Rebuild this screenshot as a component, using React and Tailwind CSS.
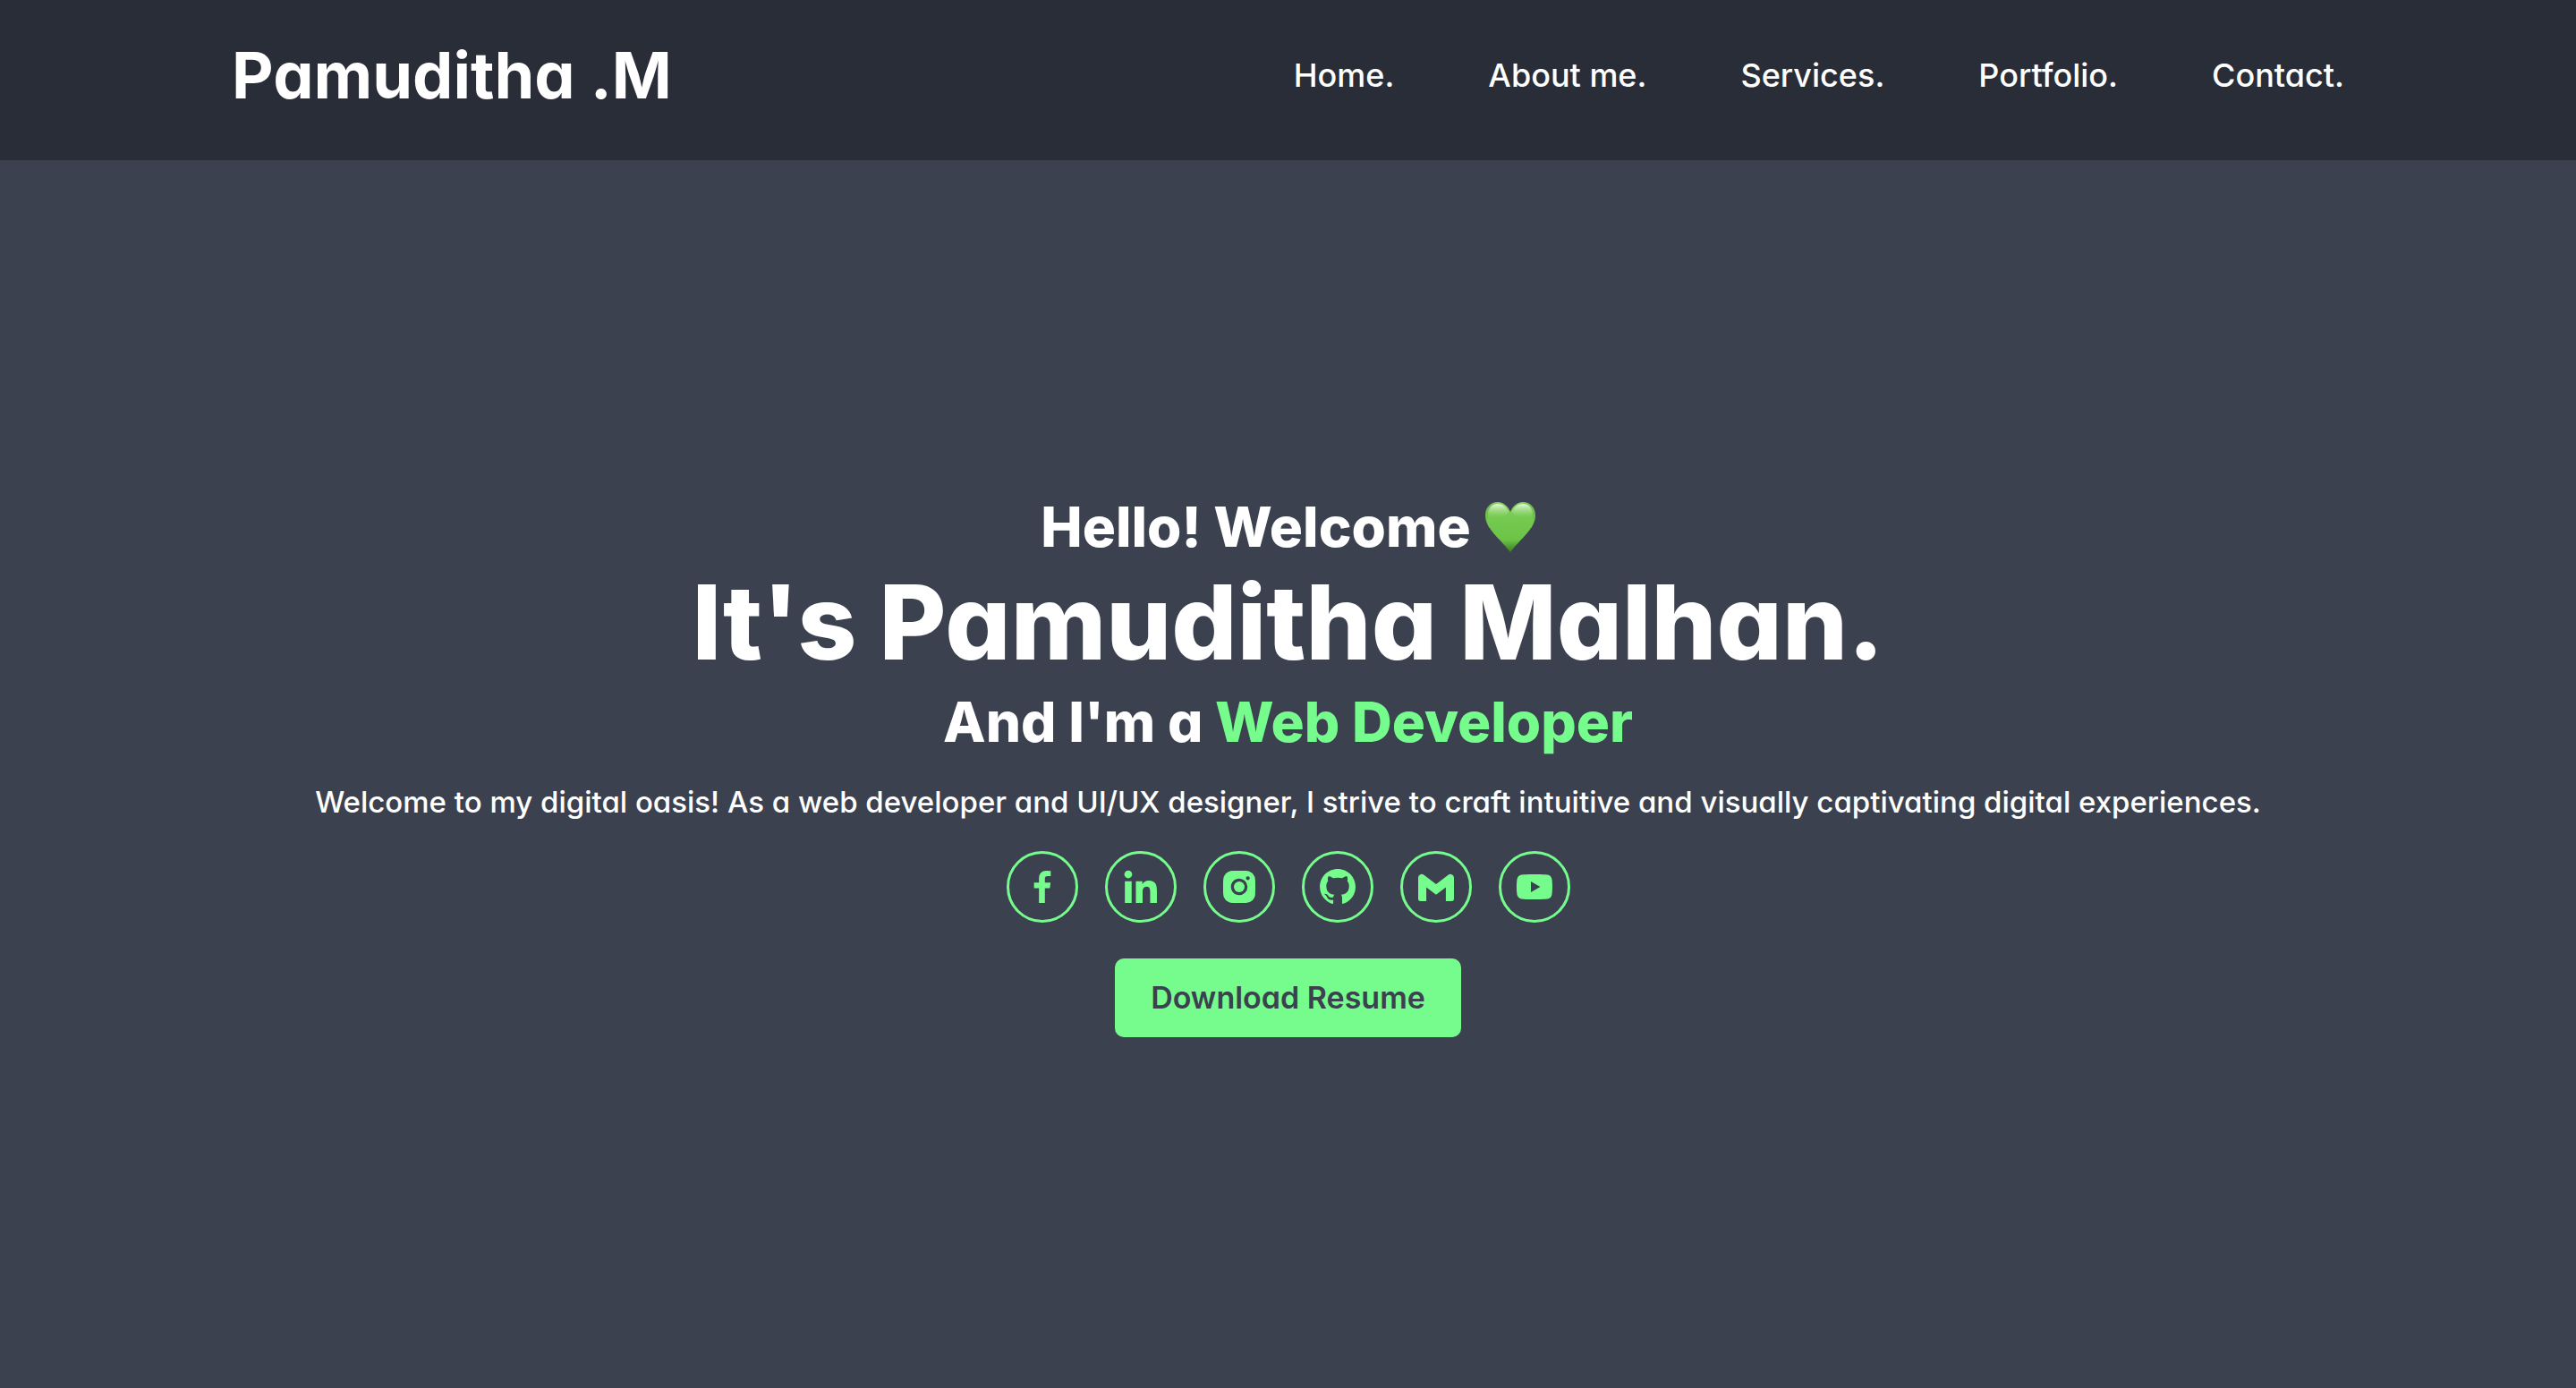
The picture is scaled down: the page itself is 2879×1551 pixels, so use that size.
import React from "react";
import {
  BiLogoFacebook,
  BiLogoLinkedin,
  BiLogoInstagramAlt,
  BiLogoGithub,
  BiLogoGmail,
  BiLogoYoutube,
} from "react-icons/bi";

const links = ["Home.", "About me.", "Services.", "Portfolio.", "Contact."];

const socials = [
  { name: "Facebook", Icon: BiLogoFacebook },
  { name: "LinkedIn", Icon: BiLogoLinkedin },
  { name: "Instagram", Icon: BiLogoInstagramAlt },
  { name: "GitHub", Icon: BiLogoGithub },
  { name: "Gmail", Icon: BiLogoGmail },
  { name: "YouTube", Icon: BiLogoYoutube },
];

function GreenHeart() {
  return (
    <svg viewBox="0 0 56 56" className="h-14 w-14" role="img" aria-label="Green heart">
      <defs>
        <linearGradient id="heart-body" x1="0" y1="0" x2="0" y2="1">
          <stop offset="0" stopColor="#86d268" />
          <stop offset="0.35" stopColor="#74c94f" />
          <stop offset="0.75" stopColor="#6cc447" />
          <stop offset="1" stopColor="#3f8526" />
        </linearGradient>
        <linearGradient id="heart-shine" x1="0" y1="0" x2="0" y2="1">
          <stop offset="0" stopColor="#f2fbe9" stopOpacity="0.9" />
          <stop offset="1" stopColor="#9add7c" stopOpacity="0" />
        </linearGradient>
        <radialGradient id="heart-edge" cx="0.5" cy="0.38" r="0.62">
          <stop offset="0.7" stopColor="#4a9a2b" stopOpacity="0" />
          <stop offset="1" stopColor="#3a7d22" stopOpacity="0.65" />
        </radialGradient>
      </defs>
      <path d="M28 11C25 4 20 0 14 0 6 0 0 6 0 15c0 15 17 26 28 41 11-15 28-26 28-41C56 6 50 0 42 0c-6 0-11 4-14 11Z" fill="url(#heart-body)" />
      <path d="M28 11C25 4 20 0 14 0 6 0 0 6 0 15c0 15 17 26 28 41 11-15 28-26 28-41C56 6 50 0 42 0c-6 0-11 4-14 11Z" fill="url(#heart-edge)" />
      <path d="M14 2c6 0 10 4 12 9-2 4-6 6-12 6-7 0-11-2-11-5C4 6 8 2 14 2ZM42 2c-6 0-10 4-12 9 2 4 6 6 12 6 7 0 11-2 11-5C52 6 48 2 42 2Z" fill="url(#heart-shine)" />
    </svg>
  );
}

export default function App() {
  return (
    <div className="flex min-h-screen flex-col bg-[#3c414f] font-['Inter',sans-serif] text-white [font-feature-settings:'cv11']">
      <header className="flex items-center justify-between bg-[#292d37] px-[9%] pt-[30px] pb-[42px]">
        <a href="#home" className="text-[72px] leading-[107px] font-bold whitespace-nowrap">
          Pamuditha .M
        </a>
        <nav>
          <ul className="flex gap-[105px] text-[36px] leading-[54px] font-medium whitespace-nowrap">
            {links.map((label) => (
              <li key={label}>
                <a href={"#" + label.split(" ")[0].replace(".", "").toLowerCase()}>{label}</a>
              </li>
            ))}
          </ul>
        </nav>
      </header>

      <main id="home" className="flex flex-1 flex-col items-center justify-center pb-6 text-center">
        <h3 className="flex items-center gap-4 text-[62px] leading-[84px] font-extrabold">
          Hello! Welcome
          <GreenHeart />
        </h3>
        <h1 className="text-[115px] leading-[130px] font-extrabold">It's Pamuditha Malhan.</h1>
        <h3 className="text-[62px] leading-[92px] font-extrabold">
          And I'm a <span className="text-[#75fc8d]">Web Developer</span>
        </h3>
        <p className="mt-4 text-[33px] leading-[54px] font-medium">
          Welcome to my digital oasis! As a web developer and UI/UX designer, I strive to craft
          intuitive and visually captivating digital experiences.
        </p>
        <div className="mt-7 flex gap-[30px]">
          {socials.map(({ name, Icon }) => (
            <a
              key={name}
              href={"#" + name.toLowerCase()}
              aria-label={name}
              className="flex size-20 items-center justify-center rounded-full border-3 border-[#75fc8d] text-[#75fc8d]"
            >
              <Icon className="size-12" />
            </a>
          ))}
        </div>
        <button
          type="button"
          className="mt-10 rounded-[10px] bg-[#75fc8d] px-10 py-5 text-[34px] leading-12 font-semibold text-[#3c414f]"
        >
          Download Resume
        </button>
      </main>
    </div>
  );
}
